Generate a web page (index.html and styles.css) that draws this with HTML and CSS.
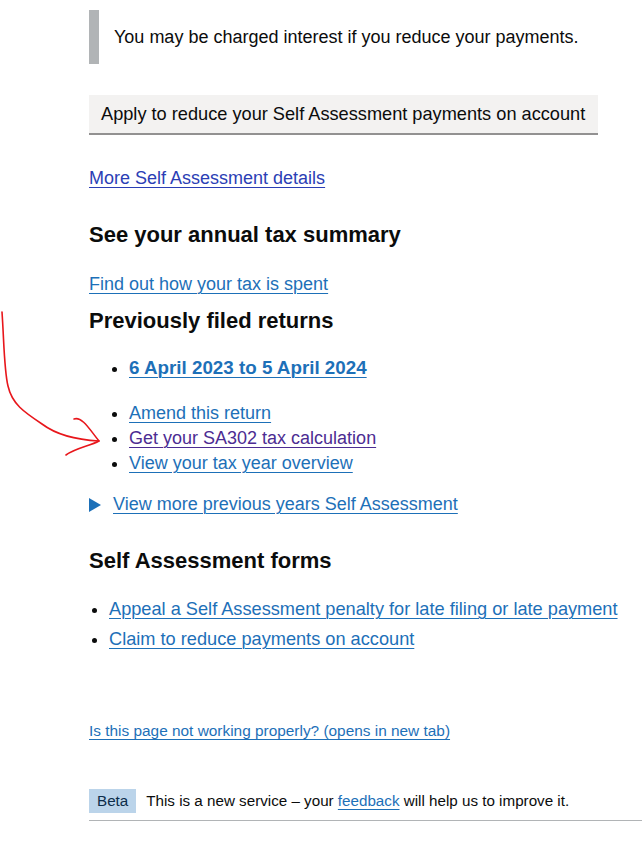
FILE: index.html
```html
<!DOCTYPE html>
<html lang="en">
<head>
<meta charset="utf-8">
<title>Self Assessment</title>
<link rel="stylesheet" href="styles.css">
</head>
<body>
<svg class="annotation" width="110" height="160" viewBox="0 0 110 160" aria-hidden="true">
  <path d="M2 12 C4 40 4 70 8 86 C12 104 24 112 42 124 C58 136 80 140 99 141" fill="none" stroke="#e8161b" stroke-width="1.6" stroke-linecap="round"/>
  <path d="M74 119 C82 116 90 130 99 141 C90 146 76 148 66 155" fill="none" stroke="#e8161b" stroke-width="1.6" stroke-linecap="round" stroke-linejoin="round"/>
</svg>
<main class="page">
  <div class="inset">You may be charged interest if you reduce your payments.</div>

  <div class="button-row">
    <a class="button" href="#">Apply to reduce your Self Assessment payments on account</a>
  </div>

  <p class="para-more"><a class="link link-more" href="#">More Self Assessment details</a></p>

  <h2 class="heading heading-summary">See your annual tax summary</h2>
  <p class="para-tight"><a class="link" href="#">Find out how your tax is spent</a></p>

  <h2 class="heading heading-filed">Previously filed returns</h2>
  <ul class="list list-filed">
    <li class="year"><a class="link bold" href="#">6 April 2023 to 5 April 2024</a></li>
  </ul>
  <ul class="list list-actions">
    <li><a class="link" href="#">Amend this return</a></li>
    <li><a class="link visited" href="#">Get your SA302 tax calculation</a></li>
    <li><a class="link" href="#">View your tax year overview</a></li>
  </ul>

  <div class="details">
    <span class="triangle"></span>
    <a class="link" href="#">View more previous years Self Assessment</a>
  </div>

  <h2 class="heading heading-forms">Self Assessment forms</h2>
  <ul class="list list-forms">
    <li><a class="link" href="#">Appeal a Self Assessment penalty for late filing or late payment</a></li>
    <li><a class="link" href="#">Claim to reduce payments on account</a></li>
  </ul>

  <p class="report"><a class="link" href="#">Is this page not working properly? (opens in new tab)</a></p>

  <div class="phase">
    <strong class="tag">Beta</strong>
    <span class="phase-text">This is a new service – your <a class="link" href="#">feedback</a> will help us to improve it.</span>
  </div>
</main>
</body>
</html>
```

FILE: styles.css
```css
html, body {
  margin: 0;
  padding: 0;
  background: #ffffff;
  overflow-x: hidden;
}

body {
  font-family: "Liberation Sans", Arial, sans-serif;
  color: #0b0c0c;
  font-size: 19px;
  line-height: 25px;
  position: relative;
}

.annotation {
  position: absolute;
  left: 0;
  top: 300px;
}

.page {
  padding: 10px 0 0 89px;
  width: 553px;
}

.inset {
  border-left: 10px solid #b1b4b6;
  padding: 15px 0 14px 15px;
  font-size: 18px;
  line-height: 25px;
}

.button-row {
  margin-top: 31px;
}

.button {
  display: inline-block;
  background: #f3f2f1;
  color: #0b0c0c;
  text-decoration: none;
  padding: 7px 12px 6px 12px;
  box-shadow: 0 2px 0 #929191;
  font-size: 18.2px;
  line-height: 25px;
  width: 485px;
  white-space: nowrap;
}

.link {
  color: #1d70b8;
  text-decoration: underline;
  text-underline-offset: 3px;
  text-decoration-thickness: 1px;
}

.link-more {
  color: #2b3eb5;
}

.visited {
  color: #4c2c92;
}

.bold {
  font-weight: 700;
  font-size: 18.8px;
}

.para-more {
  margin: 33px 0 0 0;
  font-size: 18px;
}

.heading {
  font-size: 22px;
  line-height: 30px;
  font-weight: 700;
  margin: 0;
  color: #0b0c0c;
}

.heading-summary {
  margin-top: 29px;
}

.para-tight {
  margin: 22px 0 0 0;
  font-size: 18px;
}

.heading-filed {
  margin-top: 9px;
}

.list {
  margin: 0;
  padding-left: 40px;
  font-size: 18px;
  line-height: 25px;
}

.list-filed {
  margin-top: 19px;
}

.list-actions {
  margin-top: 20px;
}

.details {
  margin-top: 16px;
  display: flex;
  align-items: center;
  gap: 12px;
  font-size: 18px;
}

.triangle {
  width: 0;
  height: 0;
  border-top: 7px solid transparent;
  border-bottom: 7px solid transparent;
  border-left: 12px solid #1d70b8;
}

.heading-forms {
  margin-top: 29px;
}

.list-forms {
  margin-top: 21px;
  padding-left: 20px;
  font-size: 18.2px;
}

.list-forms li {
  margin-bottom: 5px;
}

.report {
  margin: 69px 0 0 0;
  font-size: 15.4px;
  line-height: 20px;
}

.phase {
  margin-top: 48px;
  display: flex;
  align-items: center;
  gap: 10px;
  border-bottom: 1px solid #b1b4b6;
  padding-bottom: 7px;
  font-size: 15.2px;
  line-height: 20px;
}

.tag {
  background: #bbd4ea;
  color: #0c2d4a;
  font-weight: 400;
  font-size: 15.2px;
  padding: 2px 8px 2px 8px;
}
```
